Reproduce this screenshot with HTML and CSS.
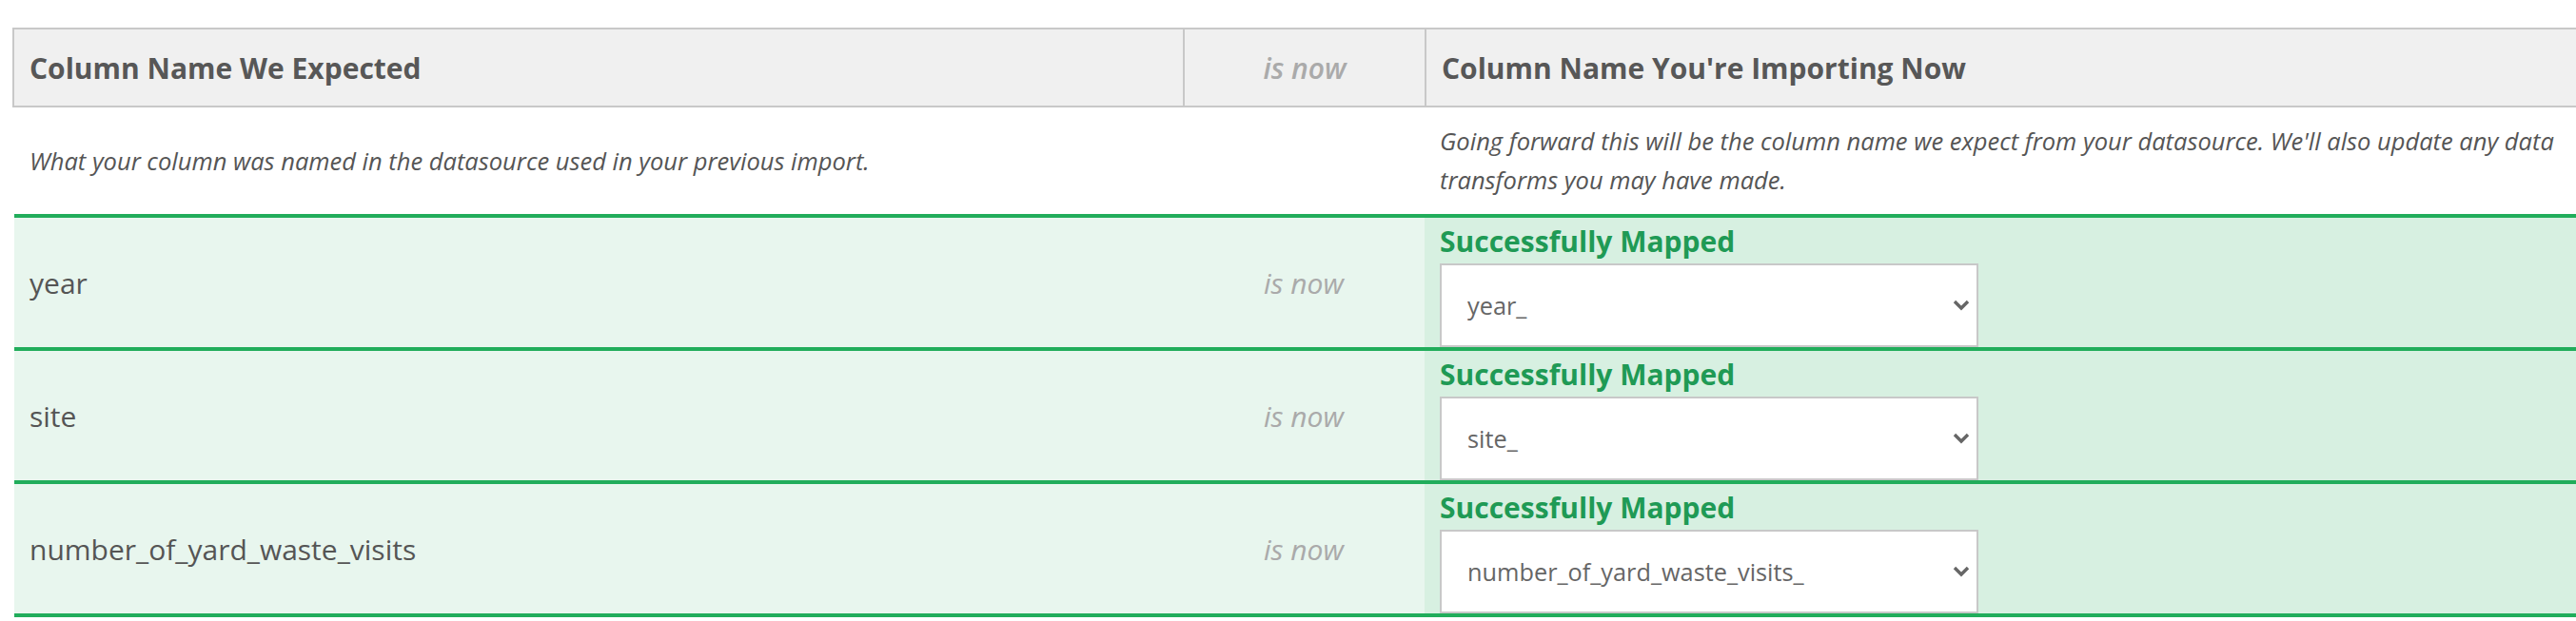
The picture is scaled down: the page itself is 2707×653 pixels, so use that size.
FILE: index.html
```html
<!DOCTYPE html>
<html lang="en">
<head>
<meta charset="utf-8">
<title>Column mapping</title>
<link rel="stylesheet" href="styles.css">
</head>
<body>
<div class="mapping">
  <div class="head">
    <div class="cell c1 h-title">Column Name We Expected</div>
    <div class="cell c2 h-isnow">is now</div>
    <div class="cell c3 h-title">Column Name You're Importing Now</div>
  </div>
  <div class="desc">
    <div class="cell c1">What your column was named in the datasource used in your previous import.</div>
    <div class="cell c2"></div>
    <div class="cell c3">Going forward this will be the column name we expect from your datasource. We'll also update any data transforms you may have made.</div>
  </div>
  <div class="row">
    <div class="cell c1 name">year</div>
    <div class="cell c2 isnow">is now</div>
    <div class="cell c3 map">
      <div class="status">Successfully Mapped</div>
      <div class="select-wrap">
        <select class="select"><option>year_</option></select>
        <svg class="chev" width="18" height="12" viewBox="0 0 18 12"><polyline points="2,2 9,9 16,2" fill="none" stroke="#666" stroke-width="3.4"/></svg>
      </div>
    </div>
  </div>
  <div class="row">
    <div class="cell c1 name">site</div>
    <div class="cell c2 isnow">is now</div>
    <div class="cell c3 map">
      <div class="status">Successfully Mapped</div>
      <div class="select-wrap">
        <select class="select"><option>site_</option></select>
        <svg class="chev" width="18" height="12" viewBox="0 0 18 12"><polyline points="2,2 9,9 16,2" fill="none" stroke="#666" stroke-width="3.4"/></svg>
      </div>
    </div>
  </div>
  <div class="row">
    <div class="cell c1 name">number_of_yard_waste_visits</div>
    <div class="cell c2 isnow">is now</div>
    <div class="cell c3 map">
      <div class="status">Successfully Mapped</div>
      <div class="select-wrap">
        <select class="select"><option>number_of_yard_waste_visits_</option></select>
        <svg class="chev" width="18" height="12" viewBox="0 0 18 12"><polyline points="2,2 9,9 16,2" fill="none" stroke="#666" stroke-width="3.4"/></svg>
      </div>
    </div>
  </div>
</div>
</body>
</html>
```

FILE: styles.css
```css
html {
  overflow: hidden;
  background: #fff;
}
body {
  margin: 0;
  font-family: "Open Sans", "Noto Sans", sans-serif;
  color: #555;
}
.mapping {
  margin: 29px 0 0 13px;
  width: 2746px;
}
.head,
.desc,
.row {
  display: grid;
  grid-template-columns: 1228px 254px 1fr;
}
.cell {
  display: flex;
  align-items: center;
  padding: 0 16px;
  box-sizing: border-box;
  min-width: 0;
}
.c2 {
  justify-content: center;
}
.head {
  height: 84px;
  box-sizing: border-box;
  border: 2px solid #c8c8c8;
  background: #f0f0f0;
}
.head .c2,
.head .c3 {
  border-left: 2px solid #c8c8c8;
}
.h-title {
  font-size: 30px;
  font-weight: 700;
  color: #575757;
}
.h-isnow {
  font-size: 30px;
  font-weight: 600;
  font-style: italic;
  color: #aaa;
}
.desc {
  margin-left: 2px;
  height: 112px;
  font-size: 25.5px;
  font-style: italic;
  line-height: 41px;
  color: #555;
}
.row {
  margin-left: 2px;
  height: 136px;
  border-top: 4px solid #21ad5b;
  background: #e8f6ee;
}
.row:last-child {
  border-bottom: 4px solid #21ad5b;
}
.name {
  font-size: 30px;
  color: #555;
}
.isnow {
  font-size: 30px;
  font-style: italic;
  color: #aaa;
}
.map {
  background: #d7f0e1;
  flex-direction: column;
  align-items: flex-start;
  justify-content: flex-start;
  padding-top: 4px;
}
.status {
  font-size: 30px;
  font-weight: 700;
  line-height: 41px;
  color: #1f9a55;
  margin-bottom: 3px;
}
.select-wrap {
  position: relative;
  width: 566px;
  height: 88px;
}
.select {
  appearance: none;
  -webkit-appearance: none;
  width: 100%;
  height: 100%;
  box-sizing: border-box;
  margin: 0;
  border: 2px solid #c8c8c8;
  border-radius: 0;
  background: #fff;
  padding: 0 40px 0 27px;
  font-family: "Open Sans", "Noto Sans", sans-serif;
  font-size: 25.3px;
  color: #666;
}
.chev {
  position: absolute;
  right: 9px;
  top: 38px;
  pointer-events: none;
}
```
